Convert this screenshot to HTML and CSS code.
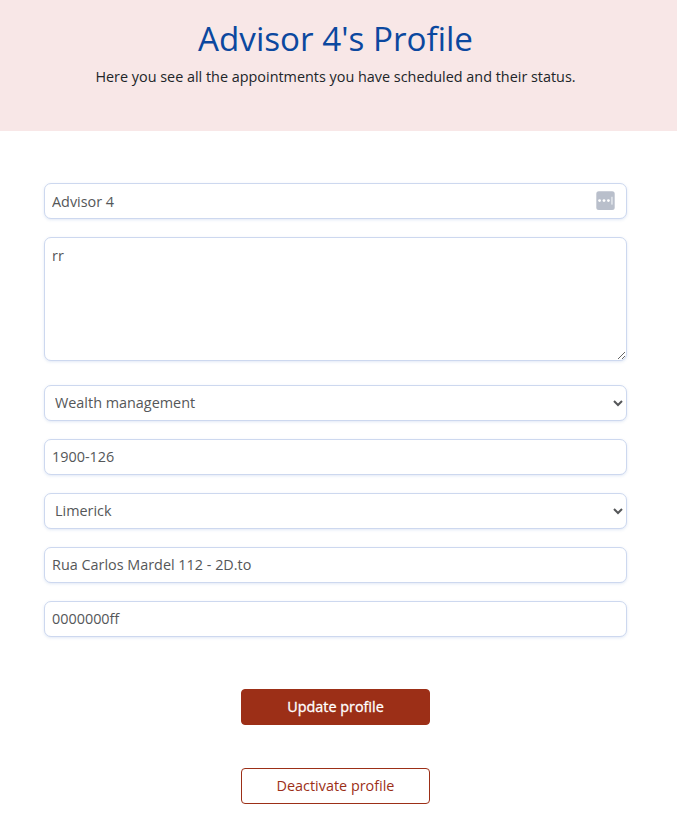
FILE: index.html
```html
<!DOCTYPE html>
<html lang="en">
<head>
<meta charset="utf-8">
<title>Advisor 4's Profile</title>
<link rel="stylesheet" href="styles.css">
</head>
<body>
<header class="banner">
  <h1 class="banner-title">Advisor 4's Profile</h1>
  <p class="banner-text">Here you see all the appointments you have scheduled and their status.</p>
</header>
<main class="profile">
  <form class="profile-form">
    <div class="name-field">
      <input class="field field-name" type="text" value="Advisor 4">
      <svg class="autofill" viewBox="0 0 19 19" width="19" height="19">
        <rect x="0.3" y="0.3" width="18.4" height="18.7" rx="2.5" fill="#b9bfcb"/>
        <circle cx="3.6" cy="9.6" r="1.4" fill="#fff"/>
        <circle cx="8" cy="9.6" r="1.4" fill="#fff"/>
        <circle cx="12.4" cy="9.6" r="1.4" fill="#fff"/>
        <rect x="15.2" y="5.8" width="1.5" height="7.8" fill="#e3e6eb"/>
      </svg>
    </div>
    <textarea class="field field-area">rr</textarea>
    <select class="field field-select"><option>Wealth management</option></select>
    <input class="field" type="text" value="1900-126">
    <select class="field field-select"><option>Limerick</option></select>
    <input class="field" type="text" value="Rua Carlos Mardel 112 - 2D.to">
    <input class="field" type="text" value="0000000ff">
  </form>
  <div class="actions">
    <button class="btn btn-primary" type="button">Update profile</button>
    <button class="btn btn-outline" type="button">Deactivate profile</button>
  </div>
</main>
</body>
</html>
```
FILE: styles.css
```css
* { box-sizing: border-box; }
body {
  margin: 0;
  background: #fff;
  color: #212529;
  font-family: "Open Sans", sans-serif;
  font-size: 14.4px;
}
.banner {
  height: 131px;
  padding: 18px 6px 0 0;
  background: #f8e7e7;
  text-align: center;
}
.banner-title {
  margin: 0;
  color: #0b489f;
  font-size: 33.2px;
  font-weight: 400;
  line-height: 42px;
}
.banner-text { margin: 6px 0 0; line-height: 22px; }
.profile { padding: 52px 50px 0 44px; }
.profile-form { display: flex; flex-direction: column; gap: 18px; }
.name-field { position: relative; display: flex; }
.autofill { position: absolute; right: 12px; top: 8px; }
.field {
  width: 100%;
  height: 36px;
  margin: 0;
  padding: 5px 7px 7px;
  border: 1px solid #cdd8ef;
  border-radius: 7px;
  background-color: #fff;
  box-shadow: 0 1px 3px rgba(70, 110, 190, 0.16);
  color: #555759;
  font: inherit;
  outline: 0;
}
.field-name { padding: 6px 7px; }
.field-area { height: 124px; margin-bottom: 6px; padding-top: 8px; resize: vertical; }
.field-select { padding: 5px 0 7px 6px; }
.actions {
  display: flex;
  flex-direction: column;
  align-items: center;
  gap: 43px;
  padding-top: 52px;
}
.btn {
  width: 189px;
  height: 36px;
  padding: 0 0 2px;
  border: 1px solid #9c2f17;
  border-radius: 4px;
  font: inherit;
}
.btn-primary { background: #9c2f17; color: #fff; font-weight: 500; -webkit-text-stroke: 0.3px #fff; }
.btn-outline { background: #fff; color: #9c2f17; }
```
